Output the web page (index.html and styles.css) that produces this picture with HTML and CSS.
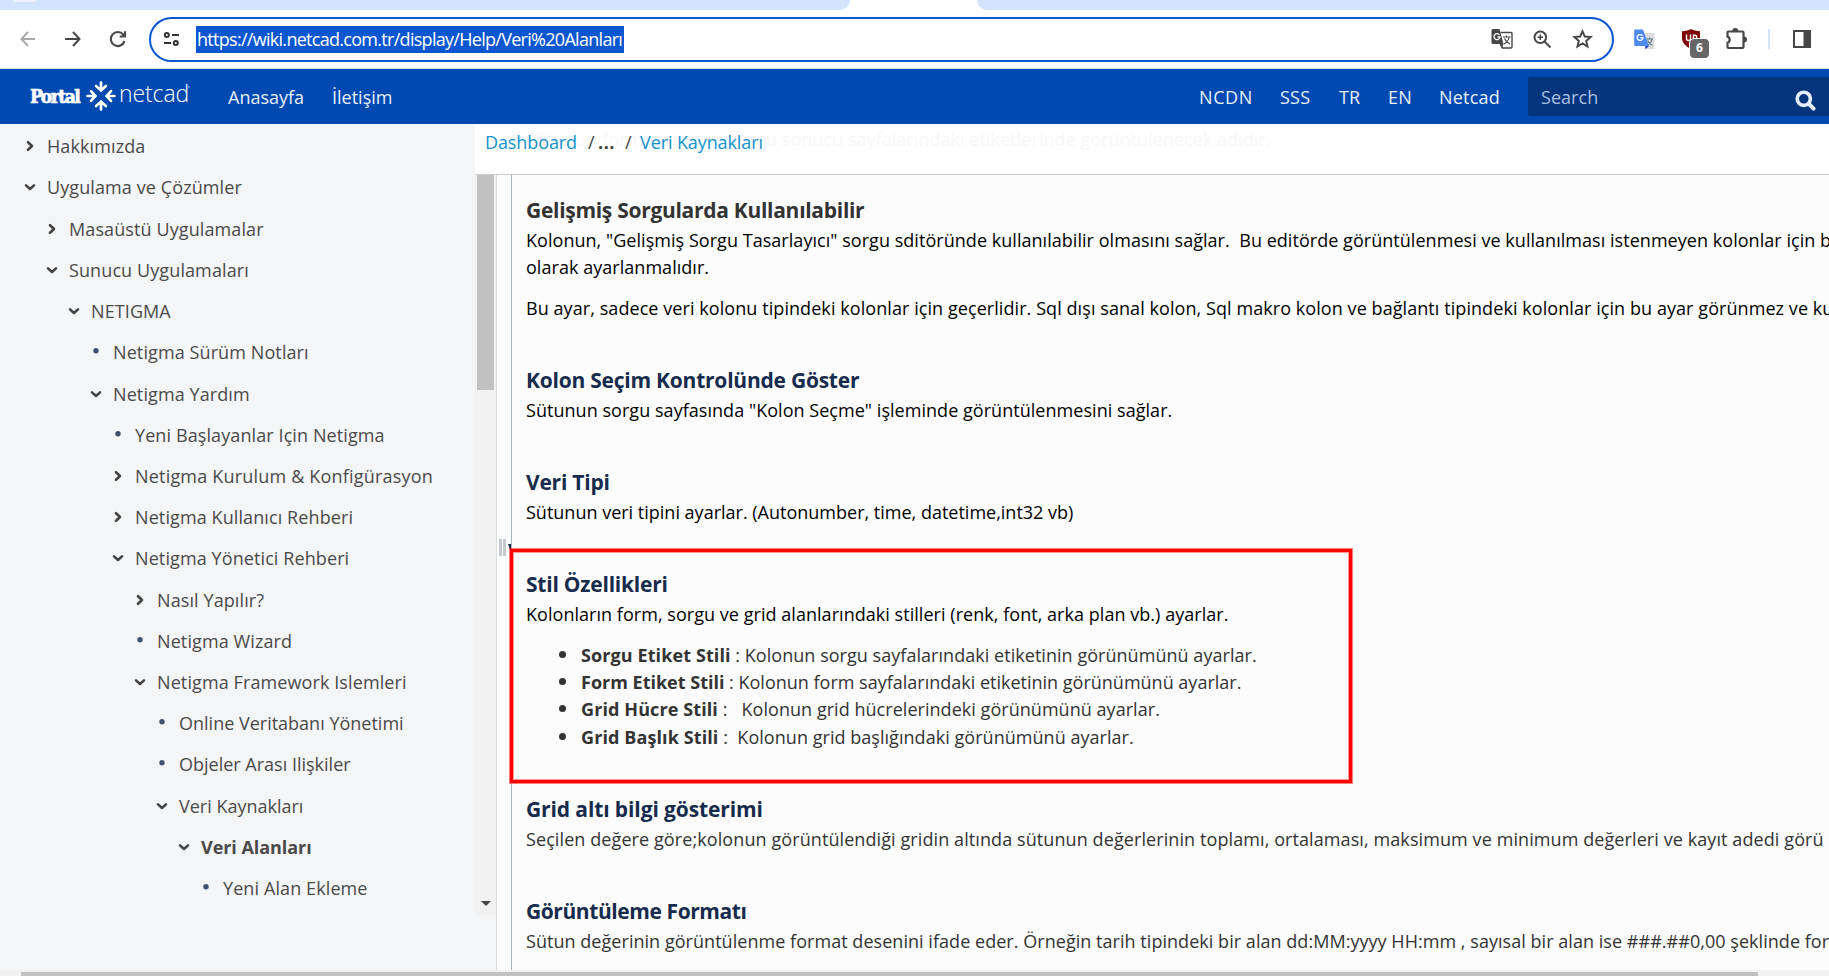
FILE: index.html
```html
<!DOCTYPE html>
<html lang="tr">
<head>
<meta charset="utf-8">
<title>Veri Alanları</title>
<link rel="stylesheet" href="styles.css">
</head>
<body>
<svg class="defs" width="0" height="0">
  <symbol id="right" viewBox="0 0 12 12"><path d="M4 2.200 8 6 4 9.800" fill="none" stroke="#444" stroke-width="2.600" stroke-linecap="round" stroke-linejoin="round"/></symbol>
  <symbol id="down" viewBox="0 0 12 12"><path d="M2 4.400 6 8l4-3.600" fill="none" stroke="#444" stroke-width="2.600" stroke-linecap="round" stroke-linejoin="round"/></symbol>
  <symbol id="dot" viewBox="0 0 12 12"><circle cx="6" cy="4.800" r="2.700" fill="#42526e"/></symbol>
</svg>
<div class="tabstrip"><i class="tab-foot"></i><i class="strip-a"></i><i class="strip-gap"></i><i class="strip-b"></i></div>
<div class="toolbar">
  <svg class="back" width="18" height="18" viewBox="0 0 18 18" fill="none" stroke="#a9a9a9" stroke-width="2"><path d="M16 9H3M9 2 2.500 9 9 16"/></svg>
  <svg class="fwd" width="18" height="18" viewBox="0 0 18 18" fill="none" stroke="#474747" stroke-width="2"><path d="M1 9h14M9 2l6.500 7L9 16"/></svg>
  <svg class="reload" width="18" height="18" viewBox="0 0 18 18" fill="none" stroke="#474747" stroke-width="2.200"><path d="M15.500 11.200A7 7 0 1 1 14.200 4.500L16 6.300M16 1.200v5.300h-5.300"/></svg>
  <div class="omnibox">
    <svg class="tune" width="17" height="16" viewBox="0 0 17 16" fill="none" stroke="#333" stroke-width="2"><circle cx="3.800" cy="4" r="2"/><path d="M9 4h7M1 12h7"/><circle cx="12.800" cy="12" r="2"/></svg>
    <span class="url">https://wiki.netcad.com.tr/display/Help/Veri%20Alanları</span>
    <svg class="gt" width="22" height="22" viewBox="0 0 22 22"><path d="M9.500 4.500H20a1 1 0 0 1 1 1V19a1 1 0 0 1-1 1h-8.500L9 15" fill="#fff" stroke="#474747" stroke-width="1.400"/><path d="M2 1h6.500l4 15H2a1.500 1.500 0 0 1-1.500-1.500v-12A1.500 1.500 0 0 1 2 1z" fill="#474747"/><path d="M12.500 16l-1.500 4.500L9 16z" fill="#474747"/><path d="M8.500 7A3 3 0 1 0 9 9H6.500" fill="none" stroke="#fff" stroke-width="1.300"/><path d="M12 9h7.500M15.500 7.500V9M18 9.500c-.5 3-2.500 5-5 6.500M13.500 10.500c1 2.500 3 4.500 5.500 5.500" fill="none" stroke="#474747" stroke-width="1.200"/></svg>
    <svg class="mag" width="19" height="19" viewBox="0 0 19 19" fill="none" stroke="#474747" stroke-width="2"><circle cx="7.300" cy="7.300" r="5.800"/><path d="m11.500 11.500 6 6"/><path d="M4.600 7.300H10M7.300 4.600V10" stroke-width="1.600"/></svg>
    <svg class="star" width="21" height="20" viewBox="0 0 21 20" fill="none" stroke="#474747" stroke-width="2"><path d="m10.500 2.300 2.300 5.300 5.800.5-4.400 3.800 1.300 5.600-5-3-5 3 1.300-5.600L2.400 8.100l5.800-.5z"/></svg>
  </div>
  <svg class="gt2" width="22" height="21" viewBox="0 0 22 21"><path d="M10 4h10.500v16H13z" fill="#dcdcdc"/><path d="M12 10h7M15.500 8.500V10M18 10.500c-.5 2.500-2.500 4.500-4.500 5.500M13.500 11.500c1 2 3 4 5 4.500" fill="none" stroke="#647b85" stroke-width="1.200"/><path d="M1 .5h8L15 17H1a.8.800 0 0 1-.8-.8V1.300A.8.800 0 0 1 1 .5z" fill="#4f8af3"/><path d="M11 17h4l-3.500 3.500z" fill="#2a48c0"/><path d="M8.600 7A2.900 2.900 0 1 0 9 8.800H6.400" fill="none" stroke="#fff" stroke-width="1.400"/></svg>
  <div class="ublock">
    <svg width="18" height="20" viewBox="0 0 18 20"><path d="M9 0c2.500 1.600 5.500 2 9 2.200V9c0 5-4 8.500-9 11-5-2.500-9-6-9-11V2.200C3.500 2 6.500 1.600 9 0z" fill="#7d0707"/><path d="M4.500 5.500v4a2 2 0 0 0 4 0v-4M11.500 11V6.300h1.500a1.700 1.700 0 0 1 0 3.600h-1.500" fill="none" stroke="#fff" stroke-width="1.400"/></svg>
    <b>6</b>
  </div>
  <svg class="puzzle" width="23" height="23" viewBox="0 0 23 23"><path d="M3.500 4.500h14a1 1 0 0 1 1 1V20a1 1 0 0 1-1 1h-14a1 1 0 0 1-1-1v-4.200a3.300 3.300 0 0 0 0-6.200V5.500a1 1 0 0 1 1-1z" fill="none" stroke="#474747" stroke-width="2.200"/><path d="M7.300 4a3 3 0 0 1 6 0zM19 9.500a3 3 0 0 1 0 6z" fill="#474747"/></svg>
  <i class="bar"></i>
  <svg class="panel" width="18" height="18" viewBox="0 0 18 18"><rect x="1" y="1" width="16" height="16" fill="none" stroke="#474747" stroke-width="2"/><path d="M10.500 1H17v16h-6.500z" fill="#474747"/></svg>
</div>
<header class="site">
  <div class="logo">
    <b>Portal</b>
    <svg width="30" height="30" viewBox="-15 -15 30 30" fill="none" stroke="#fff" stroke-linecap="round"><g id="arm"><path d="M0-13.500V-6M-4.900-10 0-5.600l4.900-4.400" stroke-width="2.700"/></g><use href="#arm" transform="rotate(90)"/><use href="#arm" transform="rotate(180)"/><use href="#arm" transform="rotate(270)"/></svg>
    <span>netcad</span><i>'</i>
  </div>
  <nav class="left"><a class="n1">Anasayfa</a><a class="n2">İletişim</a></nav>
  <nav class="right"><a class="r1">NCDN</a><a class="r2">SSS</a><a class="r3">TR</a><a class="r4">EN</a><a class="r5">Netcad</a></nav>
  <div class="search"><span>Search</span><svg width="21" height="21" viewBox="0 0 21 21" fill="none" stroke="#e4edfb"><circle cx="8.800" cy="8.800" r="6.600" stroke-width="3.600"/><path d="m14 14 4.600 4.600" stroke-width="4" stroke-linecap="round"/></svg></div>
</header>
<div class="main">
  <aside class="side">
    <ul class="tree">
      <li class="l0"><svg><use href="#right"/></svg><span>Hakkımızda</span></li>
      <li class="l0"><svg><use href="#down"/></svg><span>Uygulama ve Çözümler</span></li>
      <li class="l1"><svg><use href="#right"/></svg><span>Masaüstü Uygulamalar</span></li>
      <li class="l1"><svg><use href="#down"/></svg><span>Sunucu Uygulamaları</span></li>
      <li class="l2"><svg><use href="#down"/></svg><span>NETIGMA</span></li>
      <li class="l3"><svg><use href="#dot"/></svg><span>Netigma Sürüm Notları</span></li>
      <li class="l3"><svg><use href="#down"/></svg><span>Netigma Yardım</span></li>
      <li class="l4"><svg><use href="#dot"/></svg><span>Yeni Başlayanlar Için Netigma</span></li>
      <li class="l4"><svg><use href="#right"/></svg><span class="wide">Netigma Kurulum &amp; Konfigürasyon</span></li>
      <li class="l4"><svg><use href="#right"/></svg><span>Netigma Kullanıcı Rehberi</span></li>
      <li class="l4"><svg><use href="#down"/></svg><span>Netigma Yönetici Rehberi</span></li>
      <li class="l5"><svg><use href="#right"/></svg><span>Nasıl Yapılır?</span></li>
      <li class="l5"><svg><use href="#dot"/></svg><span>Netigma Wizard</span></li>
      <li class="l5"><svg><use href="#down"/></svg><span>Netigma Framework Islemleri</span></li>
      <li class="l6"><svg><use href="#dot"/></svg><span>Online Veritabanı Yönetimi</span></li>
      <li class="l6"><svg><use href="#dot"/></svg><span>Objeler Arası Ilişkiler</span></li>
      <li class="l6"><svg><use href="#down"/></svg><span>Veri Kaynakları</span></li>
      <li class="l7 current"><svg><use href="#down"/></svg><span>Veri Alanları</span></li>
      <li class="l8"><svg><use href="#dot"/></svg><span>Yeni Alan Ekleme</span></li>
    </ul>
  </aside>
  <section class="page">
    <div class="crumbs">
      <div class="ghost">Sütunun form, sorgu ve sorgu sonucu sayfalarındaki etiketlerinde görüntülenecek adıdır.</div>
      <a class="c1">Dashboard</a><span class="c2">/</span><b>...</b><span class="c3">/</span><a class="c4">Veri Kaynakları</a>
    </div>
    <div class="cols">
      <div class="vscroll"><div class="track"><i class="thumb"></i><i class="arrow"></i></div></div>
      <div class="splitter"><i class="grip"></i><i class="tick"></i></div>
      <article class="content">
        <h2 class="gray">Gelişmiş Sorgularda Kullanılabilir</h2>
        <p>Kolonun, "Gelişmiş Sorgu Tasarlayıcı" sorgu sditöründe kullanılabilir olmasını sağlar.&nbsp; Bu editörde görüntülenmesi ve kullanılması istenmeyen kolonlar için b<br>olarak ayarlanmalıdır.</p>
        <p class="next">Bu ayar, sadece veri kolonu tipindeki kolonlar için geçerlidir. Sql dışı sanal kolon, Sql makro kolon ve bağlantı tipindeki kolonlar için bu ayar görünmez ve ku</p>
        <h2>Kolon Seçim Kontrolünde Göster</h2>
        <p>Sütunun sorgu sayfasında "Kolon Seçme" işleminde görüntülenmesini sağlar.</p>
        <h2>Veri Tipi</h2>
        <p class="plain">Sütunun veri tipini ayarlar. (Autonumber, time, datetime,int32 vb)</p>
        <h2>Stil Özellikleri</h2>
        <p>Kolonların form, sorgu ve grid alanlarındaki stilleri (renk, font, arka plan vb.) ayarlar.</p>
        <ul class="styles">
          <li><b>Sorgu Etiket Stili</b> : Kolonun sorgu sayfalarındaki etiketinin görünümünü ayarlar.</li>
          <li class="plain"><b>Form Etiket Stili</b> : Kolonun form sayfalarındaki etiketinin görünümünü ayarlar.</li>
          <li><b>Grid Hücre Stili</b> :&nbsp;&nbsp; Kolonun grid hücrelerindeki görünümünü ayarlar.</li>
          <li><b>Grid Başlık Stili</b> :&nbsp; Kolonun grid başlığındaki görünümünü ayarlar.</li>
        </ul>
        <h2 class="tight">Grid altı bilgi gösterimi</h2>
        <p class="soft open">Seçilen değere göre;kolonun görüntülendiği gridin altında sütunun değerlerinin toplamı, ortalaması, maksimum ve minimum değerleri ve kayıt adedi görü</p>
        <h2 class="narrow">Görüntüleme Formatı</h2>
        <p class="soft">Sütun değerinin görüntülenme format desenini ifade eder. Örneğin tarih tipindeki bir alan dd:MM:yyyy HH:mm , sayısal bir alan ise ###.##0,00 şeklinde for</p>
      </article>
    </div>
  </section>
</div>
<div class="hscroll"><i></i></div>
<div class="highlight"></div>
</body>
</html>
```
FILE: styles.css
```css
* { box-sizing: border-box; }
body {
  margin: 0; width: 1829px; height: 976px; overflow: hidden; position: relative;
  display: flex; flex-direction: column; background: #fff;
  font-family: "Open Sans", "Noto Sans", sans-serif; font-size: 18px; letter-spacing: 0.040px; white-space: nowrap;
}
i { font-style: normal; display: block; }
svg { display: block; flex: none; }
ul { list-style: none; margin: 0; padding: 0; }
.defs { position: absolute; }

.tabstrip { height: 10px; flex: none; display: flex; background: #fff; position: relative; }
.tab-foot { position: absolute; left: 13px; top: 0; width: 24px; height: 2px; border-radius: 0 0 6px 6px; background: #edf2fd; }
.strip-a { flex: none; width: 850px; background: #d3e3fd; border-radius: 0 0 12px 0; }
.strip-gap { flex: none; width: 127px; }
.strip-b { flex: 1; background: #d3e3fd; border-radius: 0 0 0 12px; }

.toolbar { height: 59px; flex: none; display: flex; align-items: flex-start; border-bottom: 1px solid #dcdcdc; background: #fff; }
.back { margin: 20px 0 0 19px; }
.fwd { margin: 20px 0 0 27px; }
.reload { margin: 20px 0 0 27px; }
.omnibox { margin: 7px 0 0 22px; width: 1465px; height: 45px; border: 2.500px solid #0b57d0; border-radius: 23px; display: flex; align-items: flex-start; }
.tune { margin: 12px 0 0 12px; }
.url { margin: 7px 0 0 16px; width: 428px; height: 27px; line-height: 26px; background: #0b57d0; color: #fff; padding-left: 1px; letter-spacing: -0.710px; }
.gt { margin: 9px 0 0 867px; }
.mag { margin: 11px 0 0 20px; }
.star { margin: 10px 0 0 20px; }
.gt2 { margin: 19px 0 0 20px; }
.ublock { margin: 19px 0 0 26px; width: 27px; height: 30px; position: relative; }
.ublock b { position: absolute; left: 8px; top: 10px; width: 19px; height: 19px; border-radius: 5px; background: #666; border: 1px solid #fff; color: #fff; font-size: 12px; line-height: 18px; text-align: center; letter-spacing: 0; box-sizing: content-box; margin: -1px; }
.puzzle { margin: 17px 0 0 16px; }
.bar { width: 2px; height: 20px; margin: 19px 0 0 20px; background: #d3e3fd; }
.panel { margin: 20px 0 0 23px; }

.site { height: 55px; flex: none; background: #0049b0; color: #e8effa; display: flex; align-items: center; }
.logo { display: flex; align-items: center; margin-left: 30px; width: 161px; color: #fff; height: 55px; }
.logo b { width: 56px; font-family: "DejaVu Serif Condensed", "DejaVu Serif", serif; font-stretch: condensed; font-size: 19px; letter-spacing: -1.500px; line-height: 24px; margin-top: -2px; -webkit-text-stroke: 0.700px #fff; }
.logo svg { margin-top: -2px; }
.logo span { font-weight: 300; font-size: 23px; margin: -7px 0 0 3px; width: 69px; letter-spacing: -0.100px; }
.logo i { font-size: 8px; margin-top: -18px; }
.site nav { margin-top: 1px; display: flex; }
.site .left { margin-left: 37px; letter-spacing: 0; }
.n1 { width: 104px; }
.site .right { margin-left: auto; letter-spacing: 0.200px; }
.r1 { width: 81px; letter-spacing: 0.600px; } .r2 { width: 59px; } .r3 { width: 49px; } .r4 { width: 51px; } .r5 { width: 89px; }
.search { width: 301px; height: 39px; background: #04347c; border-radius: 3px 0 0 3px; display: flex; color: #a9c0e2; padding-left: 13px; line-height: 41px; }
.search svg { margin: 13px 13px 0 auto; }

.main { height: 846px; flex: none; display: flex; }
.side { width: 475px; background: #f4f5f7; }
.tree { padding-top: 1.600px; color: #4a4a4a; letter-spacing: 0.100px; }
.tree li { height: 41.230px; display: flex; align-items: center; padding-left: 24px; }
.tree svg { width: 12px; height: 12px; margin-right: 11px; }
.tree .l1 { padding-left: 46px; } .tree .l2 { padding-left: 68px; } .tree .l3 { padding-left: 90px; }
.tree .l4 { padding-left: 112px; } .tree .l5 { padding-left: 134px; } .tree .l6 { padding-left: 156px; }
.tree .l7 { padding-left: 178px; } .tree .l8 { padding-left: 200px; }
.tree .l6 { letter-spacing: 0; }
.wide { letter-spacing: 0.190px; }
.current { font-weight: 700; letter-spacing: -0.050px; }

.page { width: 1354px; display: flex; flex-direction: column; }
.crumbs { height: 51px; flex: none; border-bottom: 1px solid #ccc; display: flex; padding-left: 10px; line-height: 37px; color: #444; position: relative; background: #fff; }
.crumbs > * { position: relative; }
.crumbs .ghost { position: absolute; left: 51px; top: -3px; color: #f7f7f7; }
.crumbs a { color: #1492cc; letter-spacing: -0.100px; }
.c1 { width: 103px; } .c2 { width: 10px; } .crumbs b { width: 27px; letter-spacing: 0.500px; } .c3 { width: 15px; }
.cols { height: 795px; display: flex; }
.vscroll { width: 22px; background: #f4f5f7; border-right: 1px solid #dcdcdc; }
.track { height: 740px; background: #f1f1f1; position: relative; }
.thumb { width: 17px; height: 215px; margin-left: 2px; background: #c1c1c1; }
.arrow { position: absolute; left: 6px; bottom: 9px; border: 5px solid transparent; border-top-color: #444; border-bottom: 0; }
.splitter { width: 14px; background: #fcfcfc; position: relative; }
.grip { position: absolute; left: 2px; top: 364px; width: 7px; height: 17px; border: solid #c3c8d1; border-width: 0 3px; }
.tick { position: absolute; left: 11px; top: 369px; width: 3px; height: 5px; background: #172b4d; clip-path: polygon(0 0, 100% 0, 100% 100%, 60% 100%); }
.content { flex: 1; min-width: 0; overflow: hidden; background: #fcfcfc; border-left: 1px solid #a5b3c0; padding: 18px 0 0 14px; color: #000; line-height: 27.300px; }
h2 { margin: 40.800px 0 0; font-size: 21px; line-height: 34px; color: #172b4d; letter-spacing: -0.230px; }
h2.gray { margin-top: 0; color: #333; letter-spacing: -0.290px; }
h2.tight { letter-spacing: -0.110px; }
h2.narrow { letter-spacing: -0.420px; }
p { margin: 0; }
p.next { margin-top: 13.300px; letter-spacing: 0.070px; }
.plain { letter-spacing: 0; }
.open { letter-spacing: 0.090px; }
.soft { color: #333; }
.styles { margin-top: 13.300px; padding-left: 55px; color: #333; }
.styles li { position: relative; }
.styles b { letter-spacing: 0.100px; }
.styles .plain b { letter-spacing: 0; }
.styles li::before { content: ""; position: absolute; left: -22px; top: 9px; width: 7px; height: 7px; border-radius: 50%; background: #333; }

.hscroll { height: 6px; flex: none; background: #f1f1f1; padding: 2px 0 0 21px; }
.hscroll i { width: 1737px; height: 4px; background: #c1c1c1; }
.highlight { position: absolute; left: 510px; top: 549px; width: 842px; height: 234px; border: 3px solid #f00; box-shadow: 0 0 0 1px rgba(255, 0, 0, .5), inset 0 0 0 1px rgba(255, 0, 0, .4); }
```
